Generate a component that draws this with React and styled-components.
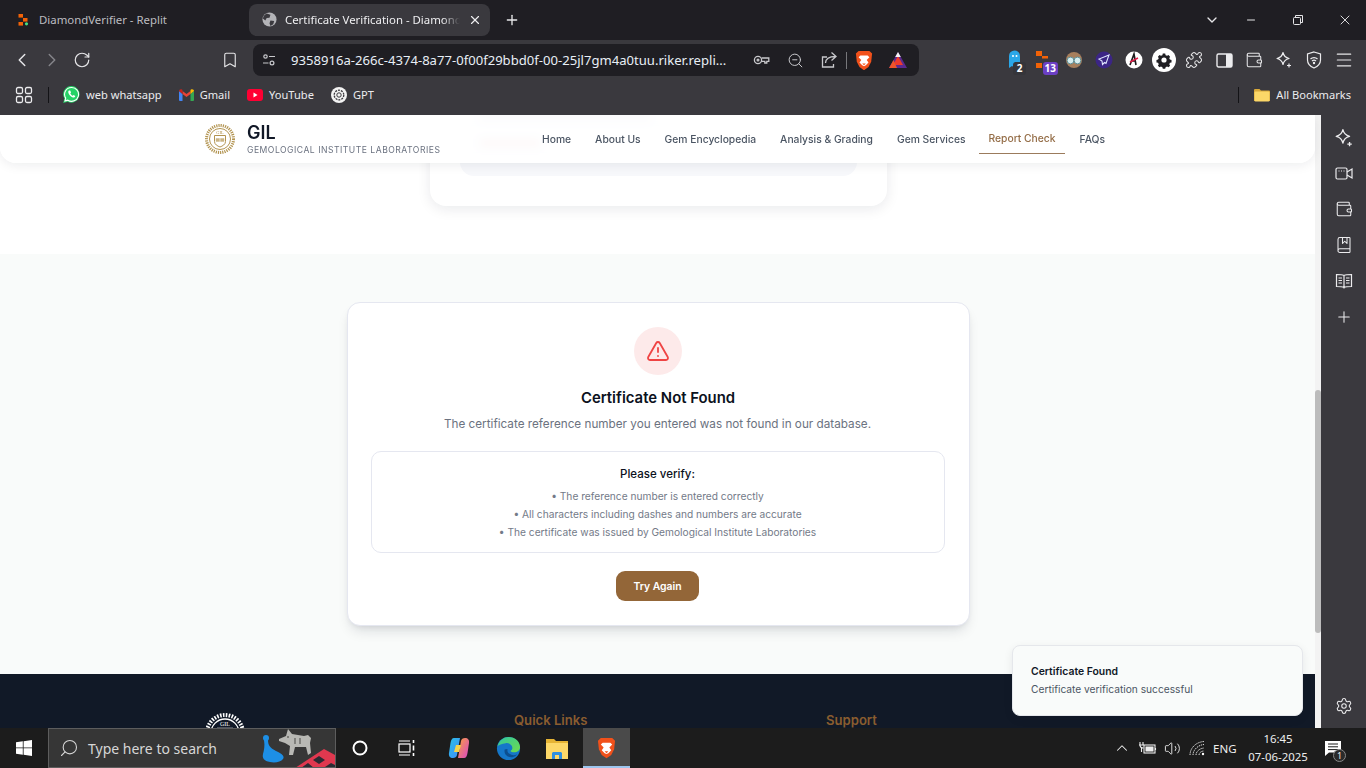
import React from 'react';
import styled, { createGlobalStyle } from 'styled-components';
import {
  BookMarked, Bookmark, ChevronDown, ChevronLeft, ChevronRight, ChevronUp, Menu, Minus,
  Plus, Puzzle, RotateCw, Search, Settings, TriangleAlert, Volume2, Wallet, X, ZoomOut,
} from 'lucide-react';

const GlobalStyle = createGlobalStyle`
  html, body { margin: 0; padding: 0; height: 100%; overflow: hidden; background: #1f1e23; }
  * { box-sizing: border-box; }
`;

const Screen = styled.div`
  width: 1366px;
  height: 768px;
  display: flex;
  flex-direction: column;
  overflow: hidden;
  font-family: "Noto Sans", "Open Sans", sans-serif;
`;

/* browser chrome */
const TabStrip = styled.div`
  height: 40px;
  flex: none;
  display: flex;
  align-items: center;
  background: #1f1e23;
  color: #e8e8ea;
  font-size: 11.4px;
  padding: 0 0 0 8px;
`;
const Tab = styled.div`
  width: 241px;
  height: 32px;
  display: flex;
  align-items: center;
  gap: ${p => (p.$active ? '8px' : '9px')};
  padding-left: ${p => (p.$active ? '13px' : '10px')};
  padding-bottom: 1px;
  border-radius: 8px;
  background: ${p => (p.$active ? '#3a393e' : 'transparent')};
  color: ${p => (p.$active ? '#eeeef0' : '#bcbcc0')};
`;
const TabTitle = styled.span`
  width: ${p => (p.$active ? '175px' : 'auto')};
  white-space: nowrap;
  overflow: hidden;
  mask-image: ${p => (p.$active ? 'linear-gradient(90deg, #000 90%, transparent)' : 'none')};
`;
const TabClose = styled.span`
  display: flex;
`;
const NewTab = styled.span`
  display: flex;
  margin-left: 14px;
`;
const WindowButtons = styled.div`
  display: flex;
  margin-left: auto;
  margin-right: -2px;
  align-items: center;
`;
const WindowButton = styled.span`
  width: ${p => (p.$narrow ? '31px' : '47px')};
  display: flex;
  justify-content: center;
  color: #e6e6e8;
`;
const Toolbar = styled.div`
  height: 40px;
  flex: none;
  display: flex;
  align-items: center;
  background: #3a393e;
  padding: 0 7px;
  color: #e6e6e8;
`;
const ToolButton = styled.span`
  width: 30px;
  height: 30px;
  flex: none;
  display: flex;
  align-items: center;
  justify-content: center;
  position: relative;
  color: ${p => (p.$dim ? '#85858a' : 'inherit')};
`;
const BookmarkSlot = styled(ToolButton)`
  margin-left: 118px;
`;
const UrlBar = styled.div`
  width: 666px;
  height: 32px;
  margin-left: 8px;
  display: flex;
  align-items: center;
  border-radius: 8px;
  background: #1f1e23;
  padding-left: 8px;
  color: #c8c8cc;
`;
const UrlText = styled.span`
  width: 445px;
  margin-left: 14px;
  font-size: 13.1px;
  color: #e8eef6;
  white-space: nowrap;
`;
const UrlIcons = styled.div`
  display: flex;
  align-items: center;
  margin-left: 8px;
`;
const UrlIcon = styled.span`
  width: 34px;
  display: flex;
  justify-content: center;
`;
const UrlDivider = styled.span`
  width: 1px;
  height: 17px;
  background: #77777b;
`;
const Extensions = styled.div`
  display: flex;
  margin-left: auto;
`;
const Badge = styled.span`
  position: absolute;
  right: ${p => p.$right || '-1px'};
  bottom: 0;
  height: 13px;
  min-width: 13px;
  padding: 0 2px;
  border-radius: 3px;
  background: ${p => p.$bg};
  color: #fff;
  font-size: 10px;
  font-weight: 700;
  line-height: 13px;
  text-align: center;
`;
const BookmarksBar = styled.div`
  height: 35px;
  flex: none;
  display: flex;
  align-items: center;
  background: #3a393e;
  color: #ececee;
  font-size: 11.1px;
  padding: 0 15px 6px;
`;
const BarDivider = styled.span`
  width: 1px;
  height: 16px;
  background: #131316;
  margin: ${p => p.$margin};
`;
const BookmarkItem = styled.span`
  display: flex;
  align-items: center;
  gap: 6px;
  margin-right: 17px;
  white-space: nowrap;
`;
const AllBookmarks = styled(BookmarkItem)`
  margin-right: 0;
`;

/* page viewport */
const Main = styled.div`
  flex: 1;
  min-height: 0;
  display: flex;
`;
const Viewport = styled.div`
  flex: 1;
  min-width: 0;
  position: relative;
  overflow: hidden;
  display: flex;
  font-family: Inter, "Liberation Sans", sans-serif;
`;
const Page = styled.div`
  flex: 1;
  min-width: 0;
  background: #fff;
  display: flex;
  flex-direction: column;
`;
const ResultSection = styled.section`
  height: 139px;
  flex: none;
  overflow: hidden;
  display: flex;
  justify-content: center;
  align-items: flex-end;
  padding: 0 0 48px 2px;
`;
const ResultCard = styled.div`
  width: 457px;
  height: 200px;
  flex: none;
  padding: 0 30px 30px;
  border-radius: 16px;
  background: #fff;
  box-shadow: 0 3px 14px rgba(15, 23, 42, 0.09);
  display: flex;
  align-items: flex-end;
`;
const ResultBox = styled.div`
  width: 100%;
  height: 130px;
  border-radius: 14px;
  background: #f7f8fb;
  padding: 66px 20px 0;
  display: flex;
  flex-direction: column;
  gap: 19px;
`;
// the scrolled-away result rows only show as a smear through the blurred header
const BlurredRow = styled.div`
  width: ${p => p.$width};
  height: 8px;
  background: ${p => p.$color};
  opacity: 0.55;
`;
const ErrorSection = styled.section`
  height: 420px;
  flex: none;
  background: #f9fbfa;
  display: flex;
  justify-content: center;
  padding: 48px 0 0 1px;
`;
const ErrorCard = styled.div`
  width: 623px;
  height: 324px;
  flex: none;
  background: #fff;
  border: 1px solid #e5e7f0;
  border-radius: 13px;
  box-shadow: 0 8px 14px -4px rgba(15, 23, 42, 0.14), 0 3px 6px -3px rgba(15, 23, 42, 0.1);
  padding: 24px 24px 0;
  display: flex;
  flex-direction: column;
  align-items: center;
`;
const AlertCircle = styled.div`
  width: 48px;
  height: 48px;
  flex: none;
  border-radius: 50%;
  background: #fdeaea;
  color: #ef4444;
  display: flex;
  align-items: center;
  justify-content: center;
`;
const ErrorTitle = styled.h2`
  margin: 13px 0 0;
  font-size: 14.9px;
  line-height: 20px;
  font-weight: 600;
  color: #0b1120;
`;
const ErrorText = styled.p`
  margin: 7px 1px 0 0;
  font-size: 11.73px;
  line-height: 18px;
  color: #6b7280;
`;
const VerifyBox = styled.div`
  width: 574px;
  height: 102px;
  flex: none;
  margin-top: 18px;
  border: 1px solid #e5e7f0;
  border-radius: 10px;
  padding-top: 12px;
  text-align: center;
`;
const VerifyTitle = styled.div`
  font-size: 11.5px;
  line-height: 20px;
  font-weight: 500;
  color: #0b1120;
  margin: 0 1px 3px 0;
`;
const VerifyLine = styled.div`
  font-size: 10.2px;
  line-height: 18px;
  color: #737a88;
  margin-right: 1px;
`;
const TryAgain = styled.button`
  width: 83px;
  height: 30px;
  flex: none;
  margin: 18px 1px 0 0;
  border: 0;
  border-radius: 9px;
  background: #936638;
  color: #fff;
  font-family: inherit;
  font-size: 10.4px;
  font-weight: 600;
`;
const Footer = styled.footer`
  flex: 1;
  background: #111927;
  padding: 39px 0 0 205px;
  display: flex;
`;
const FooterLogo = styled.div`
  width: 309px;
  flex: none;
  color: #fff;
`;
const FooterHeading = styled.h4`
  margin: 0;
  width: ${p => p.$width};
  flex: none;
  font-size: 13.1px;
  line-height: 15px;
  font-weight: 600;
  color: #8a5d2f;
`;

/* overlays on the page */
const Header = styled.header`
  position: absolute;
  left: 0;
  top: 0;
  width: 1315px;
  height: 48px;
  display: flex;
  align-items: center;
  padding-left: 205px;
  background: rgba(255, 255, 255, 0.9);
  backdrop-filter: blur(4px);
  border-radius: 0 0 16px 16px;
  box-shadow: 0 2px 12px rgba(15, 23, 42, 0.08);
`;
const Brand = styled.div`
  width: 328px;
  flex: none;
  display: flex;
  align-items: center;
  gap: 12px;
`;
const BrandText = styled.div`
  padding-top: 1px;
`;
const BrandName = styled.div`
  font-size: 18px;
  line-height: 20px;
  font-weight: 600;
  color: #111827;
`;
const BrandSub = styled.div`
  font-size: 8.6px;
  line-height: 12px;
  letter-spacing: 0.5px;
  color: #6b7280;
  white-space: nowrap;
  margin-top: 1px;
`;
const NavLinks = styled.nav`
  display: flex;
  height: 100%;
  margin-left: 9px;
`;
const NavLink = styled.a`
  display: flex;
  align-items: center;
  height: 30px;
  margin-top: 9px;
  padding: 0 ${p => (p.$active ? '9px' : '0')} 1px;
  margin-right: ${p => (p.$active ? '15px' : p.$before ? '14px' : '24px')};
  font-size: 10.3px;
  font-weight: 500;
  white-space: nowrap;
  color: ${p => (p.$active ? '#946d47' : '#4b5563')};
  border-bottom: ${p => (p.$active ? '1px solid #9b7b5c' : '0')};
`;
const Toast = styled.div`
  position: absolute;
  right: 18px;
  bottom: 12px;
  width: 291px;
  height: 71px;
  padding: 17px 18px 0;
  background: #f9fbfa;
  border: 1px solid #e5e7eb;
  border-radius: 8px;
  box-shadow: 0 3px 10px rgba(15, 23, 42, 0.08);
`;
const ToastTitle = styled.div`
  font-size: 10.4px;
  line-height: 17px;
  font-weight: 600;
  color: #111827;
`;
const ToastText = styled.div`
  font-size: 10.2px;
  line-height: 18px;
  color: #4b5563;
`;
const ScrollTrack = styled.div`
  width: 6px;
  flex: none;
  background: #f3f3f3;
  padding-top: 275px;
`;
const ScrollThumb = styled.div`
  height: 243px;
  border-radius: 3px;
  background: #bcbcbc;
`;
const Sidebar = styled.aside`
  width: 45px;
  flex: none;
  background: #3a393e;
  color: #ececee;
  display: flex;
  flex-direction: column;
  align-items: center;
  padding: 5px 0 4px;
`;
const SideIcon = styled.span`
  width: 36px;
  height: 35.8px;
  flex: none;
  display: flex;
  align-items: center;
  justify-content: center;
`;
const SideGear = styled(SideIcon)`
  margin-top: auto;
`;

/* windows taskbar */
const Taskbar = styled.div`
  height: 40px;
  flex: none;
  display: flex;
  align-items: center;
  background: #1c1c1c;
  color: #fff;
  font-family: "Noto Sans", "Open Sans", sans-serif;
  position: relative;
  z-index: 2;
`;
const StartButton = styled.span`
  width: 48px;
  display: flex;
  justify-content: center;
`;
const SearchBox = styled.div`
  width: 288px;
  height: 40px;
  flex: none;
  display: flex;
  align-items: center;
  gap: 9px;
  padding-left: 10px;
  background: #363636;
  border: 1px solid #5d5d5d;
  color: #d6d6d6;
  font-size: 14px;
  position: relative;
  overflow: hidden;
`;
const SearchLens = styled(Search)`
  transform: scaleX(-1);
`;
const SearchArt = styled.svg`
  position: absolute;
  right: 0;
  top: 0;
`;
const TaskSlot = styled.span`
  width: 47px;
  height: 40px;
  flex: none;
  display: flex;
  align-items: center;
  justify-content: center;
`;
const AppSlot = styled(TaskSlot)`
  width: 49px;
  position: relative;
`;
const ActiveMark = styled.span`
  position: absolute;
  inset: 0 1px;
  background: #4a4a4a;
  border-bottom: 2px solid #9dc6ef;
`;
const ActiveIcon = styled.span`
  position: relative;
  display: flex;
`;
const TaskApps = styled.div`
  display: flex;
  margin-left: 4.5px;
`;
const Tray = styled.div`
  display: flex;
  align-items: center;
  margin-left: auto;
  height: 100%;
  padding-right: 20px;
  font-size: 11.5px;
  color: #eee;
`;
const TraySlot = styled.span`
  width: 25px;
  display: flex;
  justify-content: center;
`;
const TrayLang = styled.span`
  margin-left: 3.5px;
  width: 35px;
`;
const Clock = styled.div`
  width: 60px;
  text-align: center;
  font-size: 11.4px;
  line-height: 18px;
  white-space: nowrap;
`;
const Notify = styled.span`
  width: 26px;
  height: 100%;
  margin-left: 12px;
  display: flex;
  align-items: center;
  justify-content: center;
  position: relative;
`;
const NotifyCount = styled.span`
  position: absolute;
  right: 0;
  bottom: 6px;
  width: 13px;
  height: 13px;
  border-radius: 50%;
  background: #2a2a2a;
  border: 1px solid #888;
  font-size: 9px;
  line-height: 11px;
  text-align: center;
`;

const Globe = () => (
  <svg width="15" height="15" viewBox="0 0 16 16">
    <circle cx="8" cy="8" r="7.5" fill="#b4b4b8" />
    <path d="M5 1.5 9 3 8 6 5 6.5 3.5 9 1 7a7 7 0 0 1 4-5.5ZM9 9l4 .5-1 3.500-3 2-1-3Z" fill="#3a393e" />
  </svg>
);
const ReplitIcon = () => (
  <svg width="12" height="12" viewBox="0 0 12 12">
    <rect x="0.5" y="0" width="4.5" height="3.6" fill="#f26207" />
    <rect x="5" y="4" width="4.5" height="3.6" fill="#f26207" />
    <rect x="0.5" y="8" width="4.5" height="3.6" fill="#f26207" />
    <circle cx="8.5" cy="9.8" r="1.6" fill="#4ade80" />
  </svg>
);
const SiteTune = () => (
  <svg width="16" height="16" viewBox="0 0 16 16" fill="none" stroke="#c8c8cc" strokeWidth="1.2">
    <circle cx="4.5" cy="4.5" r="1.7" />
    <path d="M8 4.5h6M2 11h5.5" />
    <circle cx="11" cy="11" r="1.9" />
  </svg>
);
const KeyIcon = () => (
  <svg width="17" height="14" viewBox="0 0 17 14" fill="none" stroke="#c8c8cc" strokeWidth="1.3">
    <circle cx="5" cy="7" r="3.6" />
    <circle cx="5" cy="7" r="0.9" />
    <path d="M8.6 5h7.2v3.4h-2v1.6h-2V8.4H8.6" />
  </svg>
);
const ShareIcon = () => (
  <svg width="18" height="18" viewBox="0 0 18 18" fill="none" stroke="#c8c8cc" strokeWidth="1.300">
    <path d="M7 6H2.500v10h11v-3" />
    <path d="M5.500 12c0-4 3-6.500 10-6.500M11.500 1.500l4.500 4-4.500 4" />
  </svg>
);
const BraveLion = ({ size = 18 }) => (
  <svg width={size} height={size * 1.15} viewBox="0 0 20 23">
    <path d="M4 1h12l3 3-1 9-3 6-5 3.5L5 19l-3-6-1-9Z" fill="#f1511b" />
    <path d="M6 6h8l2 2-3 3 2 3-3 3-2 1-2-1-3-3 2-3-3-3Z" fill="#fff" />
    <path d="M8 15h4l-2 2Z" fill="#f1511b" />
  </svg>
);
const RewardsTriangle = () => (
  <svg width="18" height="17" viewBox="0 0 18 17">
    <path d="M9 0 18 16H0Z" fill="#5b2a8e" />
    <path d="M9 4 14 13H4Z" fill="#ee3a2c" />
    <path d="M9 0 11.800 5H6.200Z" fill="#f4f4f4" />
    <path d="M0 16 4.500 8 8 16Z" fill="#f0542a" />
  </svg>
);
const GhostExt = () => (
  <svg width="13" height="20" viewBox="0 0 13 20">
    <path d="M1 18V6a5.500 5.500 0 0 1 11 0v6H7v6l-3-2Z" fill="#2aa7e8" />
    <circle cx="5" cy="6" r="1" fill="#fff" />
    <circle cx="8.500" cy="6" r="1" fill="#fff" />
  </svg>
);
const OrangeExt = () => (
  <svg width="16" height="18" viewBox="0 0 16 18" fill="#f26207">
    <rect x="0" y="0" width="6" height="5" />
    <rect x="6" y="5" width="6" height="2.500" />
    <rect x="0" y="12" width="6" height="5" />
  </svg>
);
const OwlExt = () => (
  <svg width="18" height="18" viewBox="0 0 18 18">
    <circle cx="9" cy="9" r="8" fill="#a77f5d" />
    <circle cx="5.500" cy="9.500" r="3.400" fill="#d6eef0" stroke="#5f8d94" />
    <circle cx="12.500" cy="9.500" r="3.400" fill="#d6eef0" stroke="#5f8d94" />
  </svg>
);
const RocketExt = () => (
  <svg width="18" height="18" viewBox="0 0 18 18">
    <circle cx="9" cy="9" r="8.500" fill="#3b2585" />
    <path d="M14 4 4 8l3 2 .500 3.500 2-2 1.500 1Z" fill="none" stroke="#dfe6ff" strokeWidth="1.100" />
  </svg>
);
const AExt = () => (
  <svg width="18" height="18" viewBox="0 0 18 18">
    <circle cx="9" cy="9" r="8.500" fill="#fff" />
    <path d="M5 14 9 3l2 11M6.500 10h4" fill="none" stroke="#1c1c1c" strokeWidth="1.600" />
    <path d="M5 11 13 7" stroke="#e11d48" strokeWidth="1.400" />
  </svg>
);
const GearExt = () => (
  <svg width="24" height="24" viewBox="0 0 24 24">
    <circle cx="12" cy="12" r="12" fill="#fff" />
    <path d="M10.500 5h3l.500 2 1.800.800 1.800-1 2 2.100-1 1.800.800 1.800 2 .500v3l-2 .500-.800 1.800 1 1.800-2 2.100-1.800-1-1.800.800-.500 2h-3l-.500-2-1.800-.800-1.800 1-2-2.100 1-1.800-.800-1.800-2-.500v-3l2-.500.800-1.800-1-1.800 2-2.100 1.800 1 1.800-.800Z" transform="translate(2.400 1.600) scale(.8)" fill="#1f1e23" />
    <circle cx="12" cy="12" r="2.600" fill="#fff" />
  </svg>
);
const PanelIcon = () => (
  <svg width="17" height="17" viewBox="0 0 17 17">
    <rect x="1" y="2" width="15" height="13" rx="1.500" fill="none" stroke="#ececee" strokeWidth="1.400" />
    <rect x="10" y="2" width="6" height="13" fill="#ececee" />
  </svg>
);
const SparkIcon = ({ size = 18 }) => (
  <svg width={size} height={size} viewBox="0 0 18 18" fill="none" stroke="#ececee" strokeWidth="1.200" strokeLinejoin="round">
    <path d="M8 1.500c.800 3.600 2.400 5.200 6 6-3.600.800-5.200 2.400-6 6-.800-3.600-2.400-5.200-6-6 3.600-.800 5.200-2.400 6-6Z" />
    <path d="M14 12.500v4M12 14.500h4" />
  </svg>
);
const BraveShield = () => (
  <svg width="16" height="18" viewBox="0 0 16 18" fill="none" stroke="#ececee" strokeWidth="1.200">
    <path d="M8 1 14.500 3v6c0 4-3 6.500-6.500 8C4.500 15.500 1.500 13 1.500 9V3Z" />
    <path d="M4.500 8a5 5 0 0 1 7 0M6 10a3 3 0 0 1 4 0" />
    <circle cx="8" cy="12" r=".6" fill="#ececee" />
  </svg>
);
const AppsIcon = () => (
  <svg width="18" height="18" viewBox="0 0 18 18" fill="none" stroke="#ececee" strokeWidth="1.300">
    <rect x="1.500" y="1.500" width="6" height="6" rx="1.500" />
    <rect x="10.500" y="1.500" width="6" height="6" rx="1.500" />
    <rect x="1.500" y="10.500" width="6" height="6" rx="1.500" />
    <rect x="10.500" y="10.500" width="6" height="6" rx="1.500" />
  </svg>
);
const SideVideo = () => (
  <svg width="18" height="15" viewBox="0 0 18 15" fill="none" stroke="#ececee" strokeWidth="1.200">
    <rect x="1" y="2" width="11" height="11" rx="1.500" />
    <path d="M12 6 17 3v9l-5-3" />
    <path d="M3.500 5h1M6 5h1M8.500 5h1" />
  </svg>
);
const SideBook = () => (
  <svg width="18" height="18" viewBox="0 0 18 18" fill="none" stroke="#ececee" strokeWidth="1.200">
    <path d="M9 3.500C7 2.500 4 2.500 1.500 2.500v12c2.500 0 5.500 0 7.500 1 2-1 5-1 7.500-1v-12c-2.500 0-5.500 0-7.500 1ZM9 3.500v13" />
    <path d="M3.500 6h3.500M3.500 8.500h3.500M3.500 11h3.500M11 6h3.500M11 8.500h3.500M11 11h3.500" />
  </svg>
);
const WhatsApp = () => (
  <svg width="17" height="17" viewBox="0 0 17 17">
    <path d="M8.500 0a8.300 8.300 0 0 0-7.100 12.600L.2 17l4.500-1.200A8.300 8.300 0 1 0 8.500 0Z" fill="#25d366" />
    <path d="M8.500 1.500a6.900 6.900 0 0 0-5.800 10.600l-.7 2.800 2.900-.7A6.900 6.900 0 1 0 8.500 1.500Z" fill="#25d366" stroke="#fff" strokeWidth="1.100" />
    <path d="M6 4.500c-1 .6-1 2 0 3.700 1.100 1.900 2.800 3.100 4.400 3.300 1 .1 1.800-.7 1.900-1.500l-1.700-1-.8.800C8.700 9.500 7.800 8.500 7.300 7.300l.8-.8L7.200 4.500Z" fill="#fff" />
  </svg>
);
const Gmail = () => (
  <svg width="15" height="12" viewBox="0 0 15 12">
    <path d="M0 2v9a1 1 0 0 0 1 1h2.500V5Z" fill="#4285f4" />
    <path d="M15 2v9a1 1 0 0 1-1 1h-2.500V5Z" fill="#34a853" />
    <path d="M3.500 5v-3L7.500 5l4-3v3l-4 3Z" fill="#ea4335" />
    <path d="M0 2c0-1.500 1.800-2.300 3-1.400l.5.400v4Z" fill="#c5221f" />
    <path d="M15 2c0-1.500-1.800-2.300-3-1.400l-.5.400v4Z" fill="#fbbc04" />
  </svg>
);
const YouTube = () => (
  <svg width="16" height="12" viewBox="0 0 16 12">
    <rect width="16" height="12" rx="3" fill="#ff0033" />
    <path d="M6.500 3.500v5l4-2.500Z" fill="#fff" />
  </svg>
);
const GptIcon = () => (
  <svg width="16" height="16" viewBox="0 0 16 16">
    <circle cx="8" cy="8" r="8" fill="#f3f3f3" />
    <circle cx="8" cy="8" r="4.800" fill="none" stroke="#3a393e" strokeWidth="1.300" strokeDasharray="2 1" />
    <circle cx="8" cy="8" r="2.200" fill="none" stroke="#3a393e" strokeWidth="1" />
  </svg>
);
const Folder = () => (
  <svg width="16" height="14" viewBox="0 0 16 14">
    <path d="M0 2a1 1 0 0 1 1-1h4.500L7 2.500h8a1 1 0 0 1 1 1V13H0Z" fill="#d9a93a" />
    <rect x="0.500" y="3.500" width="15" height="10" rx="1" fill="#fcd868" />
  </svg>
);
const Seal = ({ size = 30, color = '#b2934f' }) => (
  <svg width={size} height={size} viewBox="0 0 30 30" fill="none" stroke={color}>
    <circle cx="15" cy="15" r="13.500" strokeWidth="3" strokeDasharray="1.200 1" />
    <circle cx="15" cy="15" r="10.500" strokeWidth="1" />
    <path d="M9.500 11.500h11v6c0 3-3 4.500-5.500 5.500-2.500-1-5.500-2.500-5.500-5.500Z" strokeWidth="1" />
    <path d="M11 14.500h3.500v3H11ZM15.500 14.500H19v3h-3.500Z" fill={color} strokeWidth=".4" opacity=".7" />
    <text x="15" y="10" fontSize="4.500" textAnchor="middle" fill={color} stroke="none" fontFamily="Liberation Serif, serif">GIL</text>
  </svg>
);
const WindowsLogo = () => (
  <svg width="16" height="16" viewBox="0 0 16 16" fill="#fff">
    <path d="M0 2.300 6.800 1.300V7.500H0ZM7.600 1.200 16 0V7.500H7.600ZM0 8.300h6.800v6.400L0 13.700ZM7.600 8.300H16V16l-8.400-1.200Z" />
  </svg>
);
const TaskView = () => (
  <svg width="18" height="16" viewBox="0 0 18 16" fill="none" stroke="#fff" strokeWidth="1.200">
    <path d="M1 1h11M1 15h11" />
    <rect x="1" y="4" width="11" height="8" />
    <path d="M15.500 0v3M15.500 5.500v5M15.500 13v3" strokeWidth="1.600" />
  </svg>
);
const Copilot = () => (
  <svg width="22" height="22" viewBox="0 0 22 22">
    <defs>
      <linearGradient id="copA" x1="0" y1="0" x2="1" y2="1">
        <stop offset="0" stopColor="#2bc0e4" />
        <stop offset="1" stopColor="#3f8cff" />
      </linearGradient>
      <linearGradient id="copB" x1="0" y1="0" x2="1" y2="1">
        <stop offset="0" stopColor="#f9a03f" />
        <stop offset="1" stopColor="#d946c8" />
      </linearGradient>
    </defs>
    <path d="M6 1h6L9 18c-.3 2-2 3-4 3-3 0-4.500-2-4-5l1.500-10C3 3 4 1 6 1Z" fill="url(#copA)" />
    <path d="M16 21h-6l3-17c.3-2 2-3 4-3 3 0 4.500 2 4 5l-1.500 10c-.500 3-1.500 5-3.500 5Z" fill="url(#copB)" />
    <path d="M8 8h5l-2 7H6Z" fill="#f4d34c" />
  </svg>
);
const Edge = () => (
  <svg width="25" height="25" viewBox="0 0 26 26">
    <defs>
      <linearGradient id="edgeA" x1="0" y1="0" x2="1" y2="1">
        <stop offset="0" stopColor="#2fc6a0" />
        <stop offset="1" stopColor="#6fdc4c" />
      </linearGradient>
    </defs>
    <circle cx="13" cy="13" r="12" fill="#1577c9" />
    <path d="M1.500 11C3 4.500 8 1 13 1c7 0 12 5 12 10.500 0 3.500-3 5.500-6 5.500-2 0-3.500-.7-4-1.500 2-1 2.500-3 1.500-5C15 8 12.500 7 10 7.500 6 8 3 9 1.500 11Z" fill="url(#edgeA)" />
    <path d="M9 14c-1 5 3 8.500 8 8 2-.2 4-1.500 5-3-3 1.500-6 1-8-.5-1.500-1-2.500-2.500-2-5Z" fill="#0c4f8f" />
  </svg>
);
const Explorer = () => (
  <svg width="22" height="22" viewBox="0 0 22 22">
    <path d="M0 2h8l2 2h12v18H0Z" fill="#e6b434" />
    <rect x="0" y="6" width="22" height="16" fill="#fdd868" />
    <path d="M6 22v-6l1-1h8l1 1v6Z" fill="#2f8fe0" />
    <rect x="9" y="18" width="4" height="4" fill="#fdd868" />
  </svg>
);
const TrayBattery = () => (
  <svg width="19" height="16" viewBox="0 0 19 16" fill="none" stroke="#eee" strokeWidth="1.100">
    <rect x="6" y="5" width="11" height="8" />
    <rect x="8" y="7" width="7" height="4" fill="#eee" />
    <path d="M17.500 8v2M1 5h5M2 2v3M5 2v3M2 5c0 2 1 3 3.500 3M3.500 8v4" />
  </svg>
);
const TrayWifi = () => (
  <svg width="16" height="16" viewBox="0 0 16 16" fill="none" stroke="#ddd" strokeWidth="1">
    <path d="M1 15C1 8 7 2 15 1.500M4 15c0-5 5-10 11-10.500M7 15c0-3 3-6.500 8-7M10 15c0-2 2-4 5-4" strokeDasharray="1.400 .8" />
    <circle cx="14" cy="14" r="1.200" fill="#fff" stroke="none" />
  </svg>
);
const NotifyIcon = () => (
  <svg width="16" height="15" viewBox="0 0 16 15" fill="#fff">
    <path d="M0 0h16v11.500H4L0 15Z" />
    <path d="M3 3h10M3 5.800h10M3 8.600h10" stroke="#1c1c1c" />
  </svg>
);

const navItems = ['Home', 'About Us', 'Gem Encyclopedia', 'Analysis & Grading', 'Gem Services', 'Report Check', 'FAQs'];
const verifyItems = [
  'The reference number is entered correctly',
  'All characters including dashes and numbers are accurate',
  'The certificate was issued by Gemological Institute Laboratories',
];

export default function App() {
  return (
    <>
      <GlobalStyle />
      <Screen>
        <TabStrip>
          <Tab>
            <ReplitIcon />
            <TabTitle>DiamondVerifier - Replit</TabTitle>
          </Tab>
          <Tab $active>
            <Globe />
            <TabTitle $active>Certificate Verification - Diamond</TabTitle>
            <TabClose><X size={14} /></TabClose>
          </Tab>
          <NewTab><Plus size={16} /></NewTab>
          <WindowButtons>
            <WindowButton $narrow><ChevronDown size={16} /></WindowButton>
            <WindowButton><Minus size={12} /></WindowButton>
            <WindowButton>
              <svg width="12" height="12" viewBox="0 0 12 12" fill="none" stroke="#e6e6e8">
                <rect x="1.500" y="3.500" width="7" height="7" rx="1" />
                <path d="M3.500 3V1.500h7v7H9" />
              </svg>
            </WindowButton>
            <WindowButton><X size={16} strokeWidth={1.400} /></WindowButton>
          </WindowButtons>
        </TabStrip>

        <Toolbar>
          <ToolButton><ChevronLeft size={22} strokeWidth={1.600} /></ToolButton>
          <ToolButton $dim><ChevronRight size={22} strokeWidth={1.600} /></ToolButton>
          <ToolButton><RotateCw size={18} strokeWidth={1.600} /></ToolButton>
          <BookmarkSlot><Bookmark size={18} strokeWidth={1.500} /></BookmarkSlot>
          <UrlBar>
            <SiteTune />
            <UrlText>9358916a-266c-4374-8a77-0f00f29bbd0f-00-25jl7gm4a0tuu.riker.repli...</UrlText>
            <UrlIcons>
              <UrlIcon><KeyIcon /></UrlIcon>
              <UrlIcon><ZoomOut size={17} strokeWidth={1.400} /></UrlIcon>
              <UrlIcon><ShareIcon /></UrlIcon>
              <UrlDivider />
              <UrlIcon><BraveLion /></UrlIcon>
              <UrlIcon><RewardsTriangle /></UrlIcon>
            </UrlIcons>
          </UrlBar>
          <Extensions>
            <ToolButton><GhostExt /><Badge $bg="#35353a" $right="3px">2</Badge></ToolButton>
            <ToolButton><OrangeExt /><Badge $bg="#6b3fc4" $right="1px">13</Badge></ToolButton>
            <ToolButton><OwlExt /></ToolButton>
            <ToolButton><RocketExt /></ToolButton>
            <ToolButton><AExt /></ToolButton>
            <ToolButton><GearExt /></ToolButton>
            <ToolButton><Puzzle size={18} strokeWidth={1.400} /></ToolButton>
            <ToolButton><PanelIcon /></ToolButton>
            <ToolButton><Wallet size={18} strokeWidth={1.400} /></ToolButton>
            <ToolButton><SparkIcon /></ToolButton>
            <ToolButton><BraveShield /></ToolButton>
            <ToolButton><Menu size={20} strokeWidth={1.400} /></ToolButton>
          </Extensions>
        </Toolbar>

        <BookmarksBar>
          <AppsIcon />
          <BarDivider $margin="0 14px 0 15px" />
          <BookmarkItem><WhatsApp />web whatsapp</BookmarkItem>
          <BookmarkItem><Gmail />Gmail</BookmarkItem>
          <BookmarkItem><YouTube />YouTube</BookmarkItem>
          <BookmarkItem><GptIcon />GPT</BookmarkItem>
          <BarDivider $margin="0 15px 0 auto" />
          <AllBookmarks><Folder />All Bookmarks</AllBookmarks>
        </BookmarksBar>

        <Main>
          <Viewport>
            <Page>
              <ResultSection>
                <ResultCard>
                  <ResultBox>
                    <BlurredRow $width="170px" $color="#9ca3af" />
                    <BlurredRow $width="60px" $color="#e58a8a" />
                  </ResultBox>
                </ResultCard>
              </ResultSection>
              <ErrorSection>
                <ErrorCard>
                  <AlertCircle><TriangleAlert size={24} strokeWidth={1.800} /></AlertCircle>
                  <ErrorTitle>Certificate Not Found</ErrorTitle>
                  <ErrorText>The certificate reference number you entered was not found in our database.</ErrorText>
                  <VerifyBox>
                    <VerifyTitle>Please verify:</VerifyTitle>
                    {verifyItems.map(item => <VerifyLine key={item}>• {item}</VerifyLine>)}
                  </VerifyBox>
                  <TryAgain>Try Again</TryAgain>
                </ErrorCard>
              </ErrorSection>
              <Footer>
                <FooterLogo><Seal size={40} color="#fff" /></FooterLogo>
                <FooterHeading $width="312px">Quick Links</FooterHeading>
                <FooterHeading $width="200px">Support</FooterHeading>
              </Footer>
            </Page>
            <ScrollTrack><ScrollThumb /></ScrollTrack>
            <Header>
              <Brand>
                <Seal />
                <BrandText>
                  <BrandName>GIL</BrandName>
                  <BrandSub>GEMOLOGICAL INSTITUTE LABORATORIES</BrandSub>
                </BrandText>
              </Brand>
              <NavLinks>
                {navItems.map((item, i) => (
                  <NavLink key={item} $active={item === 'Report Check'} $before={i === 4}>{item}</NavLink>
                ))}
              </NavLinks>
            </Header>
            <Toast>
              <ToastTitle>Certificate Found</ToastTitle>
              <ToastText>Certificate verification successful</ToastText>
            </Toast>
          </Viewport>
          <Sidebar>
            <SideIcon><SparkIcon size={20} /></SideIcon>
            <SideIcon><SideVideo /></SideIcon>
            <SideIcon><Wallet size={18} strokeWidth={1.400} /></SideIcon>
            <SideIcon><BookMarked size={18} strokeWidth={1.400} /></SideIcon>
            <SideIcon><SideBook /></SideIcon>
            <SideIcon><Plus size={18} strokeWidth={1.400} /></SideIcon>
            <SideGear><Settings size={18} strokeWidth={1.400} /></SideGear>
          </Sidebar>
        </Main>

        <Taskbar>
          <StartButton><WindowsLogo /></StartButton>
          <SearchBox>
            <SearchLens size={20} strokeWidth={1.300} />
            Type here to search
            <SearchArt width="110" height="39" viewBox="0 0 110 39">
              <circle cx="41" cy="9" r="3" fill="#1d8fe6" />
              <path d="M39 11h4c0 5 2 8 8 11 6 3 9 5 7 8-2 3-8 4-13 3-6-1-8-4-7-8 1-4 2-8 1-14Z" fill="#1d8fe6" />
              <path d="M54 10l7-3 2-7 4 5 12 2 4-1 3 3-1 5 1 10-3 2-2-8-11 0-2 8-4 0 1-9-5-3-6-2Z" fill="#b8b8b4" />
              <path d="M62 8h2M70 9v6M75 9v6" stroke="#6a6a66" strokeWidth="1.400" />
              <path d="M70 39 99 20l11 6v13Z" fill="#e0384f" />
              <path d="M76 39l7-5 6 5ZM88 31l6-4 6 4-6 4ZM100 38l6-4 4 2v3Z" fill="#2b2b33" />
            </SearchArt>
          </SearchBox>
          <TaskSlot>
            <svg width="16" height="16" viewBox="0 0 16 16" fill="none" stroke="#fff" strokeWidth="2">
              <circle cx="8" cy="8" r="6.500" />
            </svg>
          </TaskSlot>
          <TaskSlot><TaskView /></TaskSlot>
          <TaskApps>
            <AppSlot><Copilot /></AppSlot>
            <AppSlot><Edge /></AppSlot>
            <AppSlot><Explorer /></AppSlot>
            <AppSlot><ActiveMark /><ActiveIcon><BraveLion size={19} /></ActiveIcon></AppSlot>
          </TaskApps>
          <Tray>
            <TraySlot><ChevronUp size={18} strokeWidth={1.400} /></TraySlot>
            <TraySlot><TrayBattery /></TraySlot>
            <TraySlot><Volume2 size={17} strokeWidth={1.300} /></TraySlot>
            <TraySlot><TrayWifi /></TraySlot>
            <TrayLang>ENG</TrayLang>
            <Clock>
              <div>16:45</div>
              <div>07-06-2025</div>
            </Clock>
            <Notify>
              <NotifyIcon />
              <NotifyCount>1</NotifyCount>
            </Notify>
          </Tray>
        </Taskbar>
      </Screen>
    </>
  );
}
